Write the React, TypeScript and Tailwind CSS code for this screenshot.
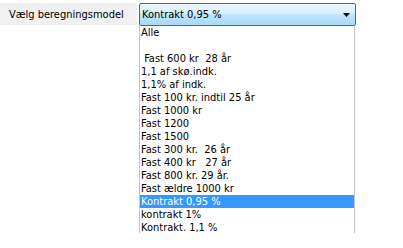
import React from "react";

const items = [
  "Alle",
  "",
  " Fast 600 kr  28 år",
  "1,1 af skø.indk.",
  "1,1% af indk.",
  "Fast 100 kr. indtil 25 år",
  "Fast 1000 kr",
  "Fast 1200",
  "Fast 1500",
  "Fast 300 kr.  26 år",
  "Fast 400 kr   27 år",
  "Fast 800 kr. 29 år.",
  "Fast ældre 1000 kr",
  "Kontrakt 0,95 %",
  "kontrakt 1%",
  "Kontrakt. 1,1 %",
];

export default function App() {
  return (
    <div
      className="w-[403px] h-[248px] bg-white relative overflow-hidden text-[11px] text-black"
      style={{ fontFamily: '"DejaVu Sans Condensed", "DejaVu Sans", Verdana, sans-serif' }}
    >
      <div className="flex items-start pt-[3px]">
        <div className="w-[137px] h-[22px] bg-[#f0f0f0] pl-[9px] flex items-center leading-none">
          Vælg beregningsmodel
        </div>
        <div className="ml-[2px] w-[217px] flex flex-col">
          <div className="h-[23px] border border-[#3c6f96] rounded-[2px] bg-[linear-gradient(to_bottom,#eaf6fd_0%,#d9f0fc_45%,#bee6fd_50%,#a7d9f5_100%)] flex items-center pl-[2px] pr-[5px]">
            <span className="flex-1 leading-none">Kontrakt 0,95 %</span>
            <svg width="7" height="4" viewBox="0 0 7 4" className="mt-[1px]">
              <path d="M0 0H7L3.5 4Z" fill="#000" />
            </svg>
          </div>
          <div className="h-[207px] overflow-hidden border-l border-r border-[#c4c4cc] w-[216px]">
            {items.map((t, i) => (
              <div
                key={i}
                className={
                  "h-[13px] leading-[13px] pl-[1px] whitespace-pre " +
                  (t === "Kontrakt 0,95 %" ? "bg-[#3399ff] text-white" : "")
                }
              >
                {t}
              </div>
            ))}
          </div>
        </div>
      </div>
    </div>
  );
}
